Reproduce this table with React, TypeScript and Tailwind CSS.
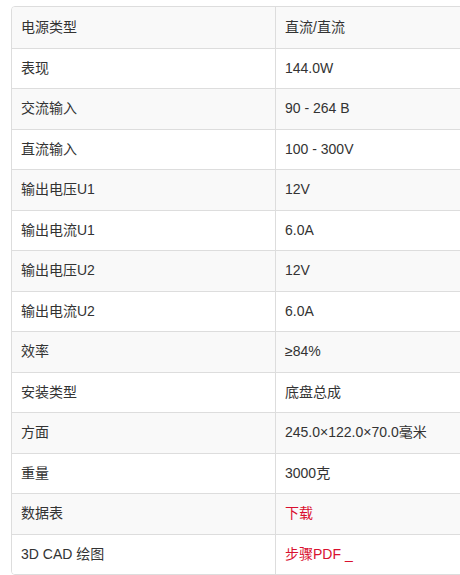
const rows: { label: string; value: string; link?: boolean }[] = [
  { label: "电源类型", value: "直流/直流" },
  { label: "表现", value: "144.0W" },
  { label: "交流输入", value: "90 - 264 B" },
  { label: "直流输入", value: "100 - 300V" },
  { label: "输出电压U1", value: "12V" },
  { label: "输出电流U1", value: "6.0A" },
  { label: "输出电压U2", value: "12V" },
  { label: "输出电流U2", value: "6.0A" },
  { label: "效率", value: "≥84%" },
  { label: "安装类型", value: "底盘总成" },
  { label: "方面", value: "245.0×122.0×70.0毫米" },
  { label: "重量", value: "3000克" },
  { label: "数据表", value: "下载", link: true },
  { label: "3D CAD 绘图", value: "步骤PDF _", link: true },
];

export default function App() {
  return (
    <div
      className="h-[575px] w-full overflow-hidden bg-white pl-[11px] pt-[6px] text-[14px] text-[#333]"
      style={{ fontFamily: '"Liberation Sans", Arial, "Noto Sans CJK SC", sans-serif' }}
    >
      <div className="w-[470px] overflow-hidden rounded-[4px] border border-[#ddd]">
        {rows.map((row, i) => (
          <div
            key={row.label}
            className={`flex h-[40.5px] items-center ${i > 0 ? "border-t border-[#ddd]" : ""} ${
              i % 2 === 0 ? "bg-[#f9f9f9]" : "bg-white"
            }`}
          >
            <div className="flex h-full w-[264px] items-center border-r border-[#ddd] pl-[9px]">
              {row.label}
            </div>
            <div className="flex h-full flex-1 items-center pl-[9px]">
              {row.link ? <a className="text-[#d9102f]">{row.value}</a> : row.value}
            </div>
          </div>
        ))}
      </div>
    </div>
  );
}
